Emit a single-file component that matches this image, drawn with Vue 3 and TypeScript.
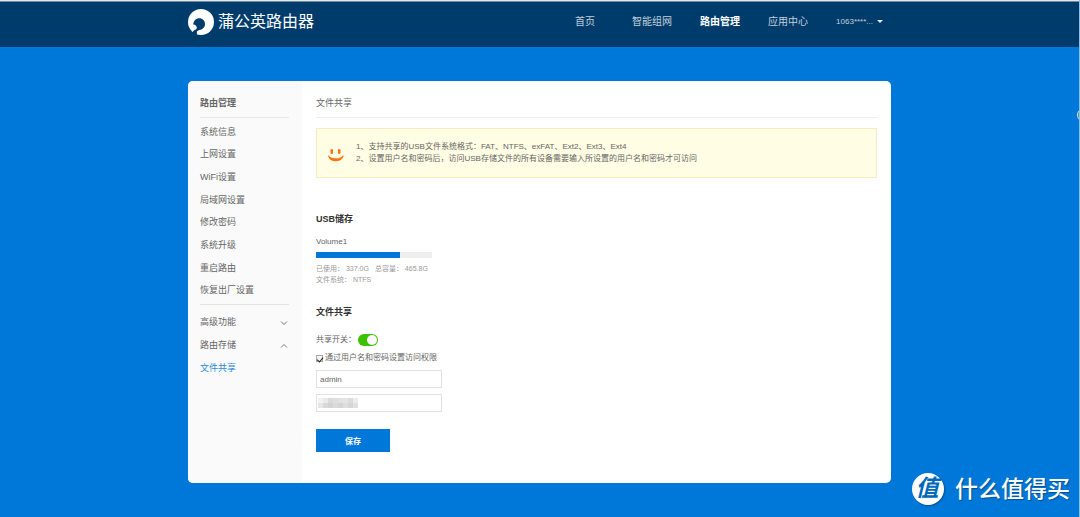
<script setup lang="ts">
import { ref } from 'vue'

interface NavItem {
  label: string
  active?: boolean
}

const navItems: NavItem[] = [
  { label: '首页' },
  { label: '智能组网' },
  { label: '路由管理', active: true },
  { label: '应用中心' },
]

const menuItems: string[] = [
  '系统信息',
  '上网设置',
  'WiFi设置',
  '局域网设置',
  '修改密码',
  '系统升级',
  '重启路由',
  '恢复出厂设置',
]

const usedGb = 337.0
const totalGb = 465.8
const shareOn = ref<boolean>(true)
const needAuth = ref<boolean>(true)
const userName = ref<string>('admin')
const password = ref<string>('')
const mosaic: string[] = [
  '#f2f2f2', '#eaeaea', '#dadada', '#dedede', '#e2e2e2', '#e4e4e4', '#dcdcdc', '#ececec',
  '#e6e6e6', '#d8d8d8', '#d2d2d2', '#dadada', '#d4d4d4', '#dedede', '#d6d6d6', '#e0e0e0',
]
</script>

<template>
  <div class="page">
    <header class="topbar">
      <div class="wrap topbar-inner">
        <a class="brand" href="#">
          <svg class="brand-mark" viewBox="0 0 26 26" aria-hidden="true">
            <circle cx="13" cy="13" r="13" fill="#fff" />
            <path
              fill="#003c6b"
              d="M5.300 15.200C5.600 11.600 8.200 9.300 11.300 9.300C14.600 9.300 17 11.800 17 15C17 18.300 14.600 20.600 11.200 21.100C9.300 21.600 8.300 22.900 9 24.800L8.400 26.500L3.500 24.500C4.300 22.800 5.600 21.500 7.400 20.400C5.900 19 5.100 17.200 5.300 15.200Z"
            />
            <path fill="#fff" d="M5 15.500C6.600 15.200 8.300 16.300 8.700 18.200C8.900 19.400 8.500 20.200 7.400 20.800C5.700 19.600 5 17.700 5 15.500Z" />
          </svg>
          <span>蒲公英路由器</span>
        </a>
        <nav class="nav">
          <a
            v-for="item in navItems"
            :key="item.label"
            href="#"
            :class="['nav-link', { active: item.active }]"
          >{{ item.label }}</a>
          <button type="button" class="account">
            <span>1063****...</span>
            <span class="caret"></span>
          </button>
        </nav>
      </div>
    </header>

    <main class="wrap card">
      <aside class="sidebar">
        <h2 class="side-title">路由管理</h2>
        <nav class="menu">
          <a v-for="item in menuItems" :key="item" href="#">{{ item }}</a>
        </nav>
        <div class="groups">
          <button type="button">
            高级功能
            <svg viewBox="0 0 8 6" aria-hidden="true"><path d="M1 1.500L4 4.500L7 1.500" /></svg>
          </button>
          <button type="button">
            路由存储
            <svg viewBox="0 0 8 6" aria-hidden="true"><path d="M1 4.500L4 1.500L7 4.500" /></svg>
          </button>
          <a class="current" href="#">文件共享</a>
        </div>
      </aside>

      <section class="content">
        <h1 class="title">文件共享</h1>
        <div class="notice">
          <svg class="smile" viewBox="0 0 16 14" aria-hidden="true">
            <rect x="2.500" y="1" width="2.500" height="5" rx="1.200" />
            <rect x="10" y="1" width="2.500" height="5" rx="1.200" />
            <path d="M0.500 7C1.500 9.300 4 10.300 7.700 10.300S14 9.300 15 7.200L15.700 8.200C14.400 11.600 11.600 13.300 7.700 13.300S1 11.500 0.100 8.200Z" />
          </svg>
          <div class="notice-text">
            <p>1、支持共享的USB文件系统格式：FAT、NTFS、exFAT、Ext2、Ext3、Ext4</p>
            <p>2、设置用户名和密码后，访问USB存储文件的所有设备需要输入所设置的用户名和密码才可访问</p>
          </div>
        </div>

        <h3 class="section-title">USB储存</h3>
        <p class="volume">Volume1</p>
        <div class="bar">
          <div class="bar-fill" :style="{ width: (usedGb / totalGb) * 100 + '%' }"></div>
        </div>
        <div class="stats">
          <p><span>已使用： {{ usedGb.toFixed(1) }}G</span><span>总容量： {{ totalGb }}G</span></p>
          <p>文件系统： NTFS</p>
        </div>

        <h3 class="section-title second">文件共享</h3>
        <form class="share" @submit.prevent>
          <label class="switch-row">
            共享开关：
            <input v-model="shareOn" class="switch" type="checkbox" role="switch" />
          </label>
          <label class="check-row">
            <input v-model="needAuth" class="check" type="checkbox" />
            通过用户名和密码设置访问权限
          </label>
          <input v-model="userName" class="field" type="text" aria-label="用户名" />
          <div class="secret">
            <input v-model="password" class="field" type="password" aria-label="密码" />
            <div class="mosaic" aria-hidden="true">
              <i v-for="(shade, i) in mosaic" :key="i" :style="{ background: shade }"></i>
            </div>
          </div>
          <button type="submit" class="save">保存</button>
        </form>
      </section>
    </main>

    <div class="edge-tab" aria-hidden="true"></div>

    <div class="watermark">
      <span class="seal">值</span>
      <span>什么值得买</span>
    </div>
  </div>
</template>

<style>
body {
  margin: 0;
  background: #0078d9;
}
</style>

<style scoped>
* {
  box-sizing: border-box;
}

.page {
  position: relative;
  min-height: 100vh;
  overflow: hidden;
  background: #0078d9;
  border-right: 1px solid #8cc0ec;
  color: #666;
  font-family: "Liberation Sans", "Noto Sans CJK SC", sans-serif;
  font-size: 9px;
}

h1, h2, h3, p {
  margin: 0;
}

a {
  color: inherit;
  text-decoration: none;
}

button, input {
  margin: 0;
  font: inherit;
  color: inherit;
}

button {
  padding: 0;
  border: 0;
  background: none;
  cursor: pointer;
}

.wrap {
  width: 703px;
  max-width: 100%;
  margin: 0 auto;
}

.topbar {
  background: #003c6b;
  border-top: 1px solid #e4e8e8;
  box-shadow: inset 0 1px 0 #6f8c9f;
}

.topbar-inner {
  display: flex;
  align-items: center;
  justify-content: space-between;
  height: 46px;
  padding-bottom: 5px;
}

.brand {
  display: flex;
  align-items: center;
  gap: 4px;
  color: #fff;
  font-size: 16px;
  line-height: 24px;
}

.brand-mark {
  width: 26px;
  height: 26px;
}

.nav {
  display: flex;
  align-items: center;
  gap: 28px;
  padding-right: 8px;
  color: #c3d0db;
  font-size: 10px;
  line-height: 16px;
}

.nav-link:first-child {
  margin-right: 9px;
}

.nav-link.active {
  color: #fff;
  font-weight: bold;
}

.account {
  display: flex;
  align-items: center;
  gap: 4px;
  font-size: 8px;
}

.caret {
  border: 3px solid transparent;
  border-top-color: #e5ebf0;
  border-bottom: 0;
}

.card {
  display: flex;
  margin-top: 34px;
  margin-bottom: 34px;
  overflow: hidden;
  background: #fff;
  border-radius: 5px;
}

.sidebar {
  flex: none;
  width: 114px;
  padding: 14px 13px 0 12px;
  background: #fafafa;
}

.side-title, .title {
  padding-bottom: 6px;
  border-bottom: 1px solid #e8e8e8;
  font-size: 9px;
  line-height: 16px;
}

.menu {
  display: grid;
  grid-auto-rows: 1fr;
  align-items: center;
  height: 187px;
  padding: 2px 0 3px;
  border-bottom: 1px solid #e4e4e4;
}

.groups {
  display: flex;
  flex-direction: column;
  padding-top: 6px;
  line-height: 23px;
}

.groups button {
  display: flex;
  align-items: center;
  justify-content: space-between;
}

.groups svg {
  width: 8px;
  height: 6px;
  margin-right: 1px;
  fill: none;
  stroke: #777;
}

.current {
  color: #2388dd;
}

.content {
  flex: 1;
  min-width: 0;
  padding: 14px 14px 31px;
}

.title {
  border-bottom-color: #ececec;
  font-weight: normal;
}

.notice {
  display: flex;
  align-items: center;
  gap: 12px;
  min-height: 50px;
  margin-top: 10px;
  padding: 0 11px;
  background: #fffde3;
  border: 1px solid #fbeac6;
  font-size: 8px;
  line-height: 12px;
}

.smile {
  flex: none;
  width: 16px;
  height: 14px;
  margin-top: 3px;
  fill: #ff7414;
}

.section-title {
  margin-top: 33px;
  color: #333;
  font-size: 9px;
  line-height: 16px;
}

.volume {
  margin-top: 9px;
  font-size: 8px;
  line-height: 12px;
}

.bar {
  width: 116px;
  height: 6px;
  margin-top: 4px;
  background: #eee;
}

.bar-fill {
  height: 100%;
  background: #0078d9;
}

.stats {
  margin-top: 5px;
  color: #999;
  font-size: 7px;
  line-height: 11px;
}

.stats span + span {
  margin-left: 6px;
}

.second {
  margin-top: 19px;
}

.share {
  display: flex;
  flex-direction: column;
  align-items: flex-start;
  font-size: 8px;
}

.switch-row, .check-row {
  display: flex;
  align-items: center;
  line-height: 12px;
}

.switch-row {
  gap: 2px;
  margin-top: 14px;
}

.switch {
  display: flex;
  width: 20px;
  height: 12px;
  padding: 1px;
  appearance: none;
  background: #ccc;
  border-radius: 6px;
}

.switch::before {
  content: "";
  width: 10px;
  height: 10px;
  background: #fff;
  border-radius: 50%;
}

.switch:checked {
  justify-content: flex-end;
  background: #3bc100;
}

.check-row {
  gap: 2px;
  margin-top: 6px;
}

.check {
  display: flex;
  align-items: flex-start;
  justify-content: center;
  width: 7px;
  height: 7px;
  appearance: none;
  background: #f4f4f4;
  border: 1px solid #aaa;
}

.check:checked::before {
  content: "";
  width: 3px;
  height: 5px;
  border: solid #222;
  border-width: 0 1px 1px 0;
  transform: rotate(40deg);
}

.field {
  display: block;
  width: 126px;
  height: 18px;
  padding: 0 3px;
  background: #fff;
  border: 1px solid #e2e2e2;
  outline: 0;
}

.check-row + .field {
  margin-top: 6px;
}

.secret {
  position: relative;
  margin-top: 6px;
}

.mosaic {
  position: absolute;
  top: 4px;
  left: 2px;
  display: grid;
  grid-template-columns: repeat(8, 5px);
  grid-auto-rows: 5px;
}

.save {
  width: 74px;
  height: 23px;
  margin-top: 17px;
  background: #0078d9;
  color: #fff;
  font-weight: bold;
}

.edge-tab {
  position: absolute;
  top: 108px;
  right: -12px;
  width: 14px;
  height: 14px;
  background: #459b73;
  border: 1px solid #d9dfdc;
  border-radius: 50%;
}

.watermark {
  position: absolute;
  right: 9px;
  bottom: 12px;
  display: flex;
  align-items: center;
  gap: 11px;
  color: #fff;
  font-size: 23px;
  font-weight: 500;
  line-height: 32px;
  text-shadow: 1px 1px 1px #00508f;
}

.seal {
  width: 32px;
  height: 32px;
  background: #fff;
  border-radius: 50%;
  box-shadow: 1px 1px 2px #00508f;
  color: #0068bb;
  font-size: 23px;
  font-style: italic;
  font-weight: bold;
  line-height: 30px;
  text-indent: -2px;
  text-align: center;
  text-shadow: none;
}
</style>
